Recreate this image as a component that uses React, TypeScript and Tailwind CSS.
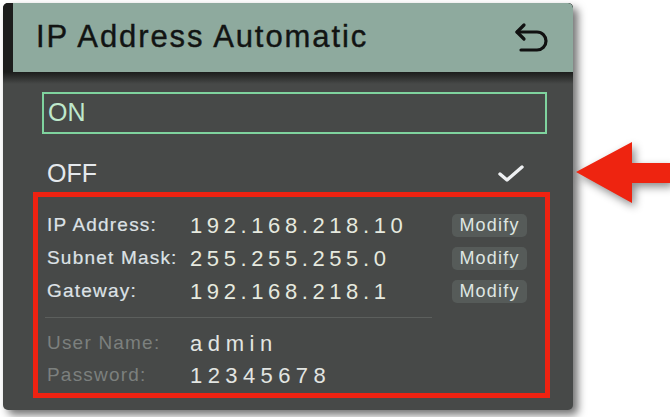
export default function App() {
  const rows = [
    { label: "IP Address:", value: "192.168.218.10" },
    { label: "Subnet Mask:", value: "255.255.255.0" },
    { label: "Gateway:", value: "192.168.218.1" },
  ];

  return (
    <div className="relative w-[670px] h-[417px] bg-white overflow-hidden font-['Liberation_Sans',Arial,sans-serif]">
      {/* device screen */}
      <div className="ml-[3px] mt-[3px] w-[570px] h-[407px] flex flex-col rounded-[5px] bg-[#474948] overflow-hidden shadow-[5px_5px_8px_rgba(0,0,0,0.55)]">
        {/* header */}
        <div className="flex h-[69px] bg-[#1c1d1c] pl-[10px]">
          <div className="flex-1 flex items-center justify-between bg-[#8eaa9e] rounded-tr-[5px] pl-[23px] pr-[22px]">
            <span className="text-[31px] tracking-[1.9px] text-[#121413] [-webkit-text-stroke:0.4px_#121413]">IP Address Automatic</span>
            <svg width="38" height="31" viewBox="0 0 38 31" fill="none" stroke="#111" strokeWidth="3.2" strokeLinecap="round" strokeLinejoin="round">
              <path d="M11 3 L4 10 L11 17" />
              <path d="M4 10 H24 A9 9 0 0 1 24 28 H8" />
            </svg>
          </div>
        </div>
        <div className="h-[12px] bg-gradient-to-b from-[#1c1d1c] to-[#474948]" />

        {/* ON option */}
        <div className="ml-[39px] mt-[8px] w-[505px] h-[42px] flex items-center border-2 border-[#7fd39e] pl-[4px] text-[25px] text-[#bfe8cc]">
          ON
        </div>

        {/* OFF option */}
        <div className="ml-[44px] mr-[48px] mt-[25px] h-[30px] flex items-center justify-between text-[25px] text-[#e4e8ec]">
          <span>OFF</span>
          <svg width="28" height="20" viewBox="0 0 28 20" fill="none" stroke="#eef0f2" strokeWidth="3.4" strokeLinecap="round" strokeLinejoin="round">
            <path d="M3 10 L10 16 L25 3" />
          </svg>
        </div>

        {/* highlighted details */}
        <div className="ml-[30px] mt-[3px] w-[517px] h-[206px] border-[5px] border-[#ee2211] pt-[12px] pl-[9px]">
          {rows.map((r) => (
            <div key={r.label} className="flex items-center h-[33px]">
              <span className="w-[143px] text-[19px] tracking-[1.2px] text-[#dde2e6] [-webkit-text-stroke:0.2px_#dde2e6]">{r.label}</span>
              <span className="w-[262px] text-[22px] tracking-[4.6px] text-[#e6e9df]">{r.value}</span>
              <span className="w-[75px] h-[23px] flex items-center justify-center rounded-[5px] bg-[#565b59] text-[18px] tracking-[1.2px] text-[#dfe6e2]">
                Modify
              </span>
            </div>
          ))}
          <div className="mt-[9px] -ml-[2px] w-[387px] h-px bg-[#5c5f5d]" />
          <div className="mt-[9px] flex items-center h-[32px]">
            <span className="w-[143px] text-[19px] tracking-[1.2px] text-[#7c807e]">User Name:</span>
            <span className="text-[22px] tracking-[5.6px] text-[#e2e5e2]">admin</span>
          </div>
          <div className="flex items-center h-[32px]">
            <span className="w-[143px] text-[19px] tracking-[1.2px] text-[#7c807e]">Password:</span>
            <span className="text-[22px] tracking-[5.4px] text-[#e2e5e2]">12345678</span>
          </div>
        </div>
      </div>

      {/* red pointer arrow */}
      <svg className="absolute left-[574px] top-[138px]" width="96" height="72" viewBox="0 0 96 72" style={{ filter: "drop-shadow(3px 4px 4px rgba(0,0,0,0.45))" }}>
        <polygon points="2,34 58,4 58,25 96,25 96,45 58,45 58,65" fill="#ee2410" />
      </svg>
    </div>
  );
}
